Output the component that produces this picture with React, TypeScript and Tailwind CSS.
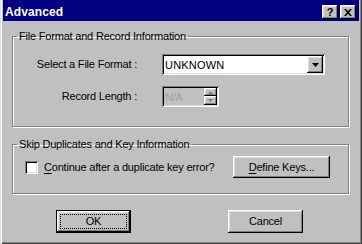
import React from 'react'

const font = { fontFamily: '"Liberation Sans", Arial, sans-serif' }

// classic win9x bevels
const raised =
  'bg-[#c0c0c0] shadow-[inset_-1px_-1px_0_#000,inset_1px_1px_0_#fff,inset_-2px_-2px_0_#808080,inset_2px_2px_0_#dfdfdf]'
const sunken =
  'shadow-[inset_1px_1px_0_#808080,inset_-1px_-1px_0_#fff,inset_2px_2px_0_#000,inset_-2px_-2px_0_#dfdfdf]'
const etched = 'border border-[#808080] shadow-[inset_1px_1px_0_#fff,1px_1px_0_#fff]'

const TitleButton = ({ children }: { children: React.ReactNode }) => (
  <div className={`w-[16px] h-[14px] flex items-center justify-center ${raised}`}>{children}</div>
)

const GroupBox = ({ title, className, children }: { title: string; className: string; children: React.ReactNode }) => (
  <fieldset className={`${etched} ${className}`}>
    <legend className="ml-[4px] px-[2px] text-[11px] leading-[13px] text-black">{title}</legend>
    {children}
  </fieldset>
)

const DownArrow = ({ color = '#000', size = 7 }: { color?: string; size?: number }) => (
  <svg width={size} height={Math.ceil(size / 2)} viewBox={`0 0 ${size} ${Math.ceil(size / 2)}`}>
    <polygon points={`0,0 ${size},0 ${size / 2},${Math.ceil(size / 2)}`} fill={color} />
  </svg>
)

export default function App() {
  return (
    <div
      className="w-[362px] h-[244px] bg-[#c0c0c0] flex flex-col pl-[3px] pr-[3px] pb-[3px] tracking-[-0.2px] shadow-[inset_1px_0_0_#dfdfdf,inset_2px_0_0_#fff,inset_-1px_-1px_0_#404040,inset_-2px_-2px_0_#808080]"
      style={font}
    >
      {/* title bar */}
      <div className="h-[21px] bg-[#000080] flex items-start justify-between pt-[5px] pl-[2px] pr-[3px]">
        <span className="text-white font-bold text-[12px] leading-[14px] tracking-[0.1px]">Advanced</span>
        <div className="flex gap-[2px]">
          <TitleButton>
            <span className="text-[11px] font-bold leading-none text-black">?</span>
          </TitleButton>
          <TitleButton>
            <svg width="8" height="7" viewBox="0 0 8 7">
              <path d="M0 0h2l2 2.2L6 0h2L5 3.5 8 7H6L4 4.8 2 7H0l3-3.5z" fill="#000" />
            </svg>
          </TitleButton>
        </div>
      </div>

      <div className="flex flex-col pl-[9px] pr-[10px] pt-[9px] text-[11px] text-black">
        <GroupBox title="File Format and Record Information" className="h-[97px] flex flex-col">
          <div className="flex items-center mt-[11px]">
            <span className="w-[124px] text-right leading-[13px]">Select a File Format :</span>
            <div className={`ml-[25px] w-[163px] h-[21px] bg-white flex items-center justify-between pl-[3px] pr-[2px] ${sunken}`}>
              <span className="text-[11px] leading-[14px] tracking-[0.2px]">UNKNOWN</span>
              <div className={`w-[16px] h-[17px] flex items-center justify-center ${raised}`}>
                <DownArrow />
              </div>
            </div>
          </div>
          <div className="flex items-center mt-[11px]">
            <span className="w-[124px] text-right leading-[13px]">Record Length :</span>
            <div className={`ml-[25px] w-[57px] h-[21px] bg-[#c0c0c0] flex items-center justify-between pl-[3px] pr-[2px] ${sunken}`}>
              <span className="text-[11px] leading-[14px] text-[#a0a0a0]">N/A</span>
              <div className="flex flex-col">
                <div className={`w-[13px] h-[8px] flex items-center justify-center ${raised}`}>
                  <svg width="5" height="3" viewBox="0 0 5 3"><polygon points="0,3 5,3 2.5,0" fill="#808080" /></svg>
                </div>
                <div className={`w-[13px] h-[9px] flex items-center justify-center ${raised}`}>
                  <DownArrow color="#808080" size={5} />
                </div>
              </div>
            </div>
          </div>
        </GroupBox>

        <GroupBox title="Skip Duplicates and Key Information" className="h-[56px] mt-[11px] flex flex-col">
          <div className="flex items-center mt-[5px]">
            <div className={`ml-[12px] w-[13px] h-[13px] bg-white ${sunken}`} />
            <span className="ml-[6px] leading-[13px]">
              <span className="underline underline-offset-2">C</span>ontinue after a duplicate key error?
            </span>
            <button className={`ml-auto mr-[18px] w-[97px] h-[22px] flex items-center justify-center ${raised}`}>
              <span className="leading-[13px]">
                <span className="underline underline-offset-2">D</span>efine Keys...
              </span>
            </button>
          </div>
        </GroupBox>

        <div className="flex mt-[16px]">
          <button className="ml-[44px] w-[75px] h-[23px] border border-black">
            <div className={`w-full h-full p-[3px] ${raised}`}>
              <div className="w-full h-full border border-dotted border-black flex items-center justify-center">
                <span className="leading-[13px]">OK</span>
              </div>
            </div>
          </button>
          <button className={`ml-[97px] w-[75px] h-[23px] flex items-center justify-center ${raised}`}>
            <span className="leading-[13px]">Cancel</span>
          </button>
        </div>
      </div>
    </div>
  )
}
